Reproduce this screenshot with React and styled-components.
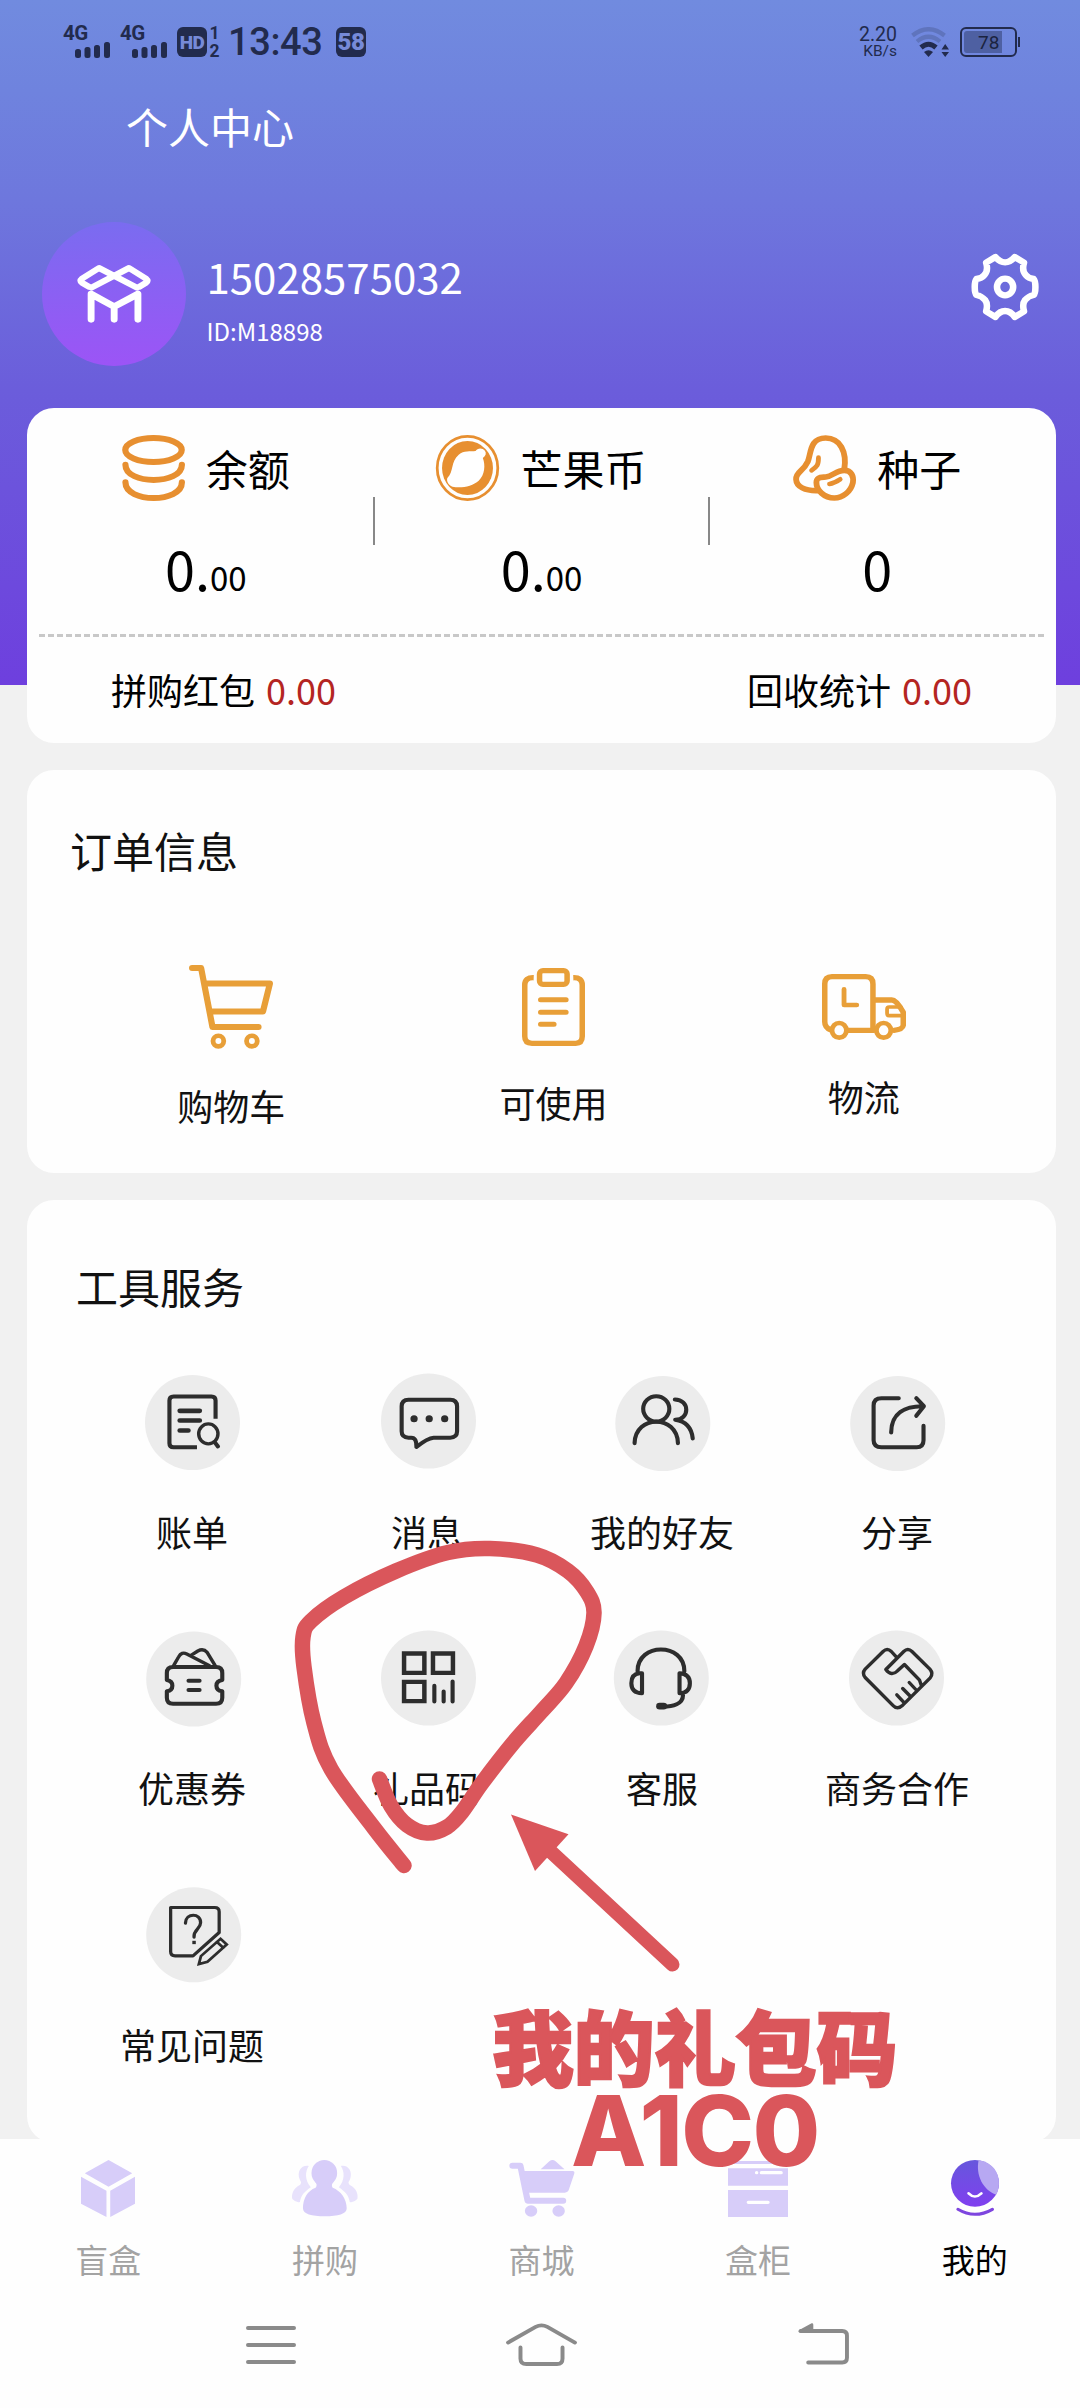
import React from "react";
import styled, { createGlobalStyle } from "styled-components";

const GlobalStyle = createGlobalStyle`
  html, body { margin: 0; padding: 0; background: #fff; }
  * { box-sizing: border-box; }
  svg { display: block; flex: none; }
`;

const cjk = `"Noto Sans CJK SC", "Noto Sans", sans-serif`;
const INK = "#222b4d";
const ORANGE = "#e78f30";
const AMBER = "#e89f38";
const DARK = "#2d2d2d";
const LILAC = "#d7cdf9";
const RED = "#da565b";

const Screen = styled.div`
  position: relative;
  width: 1080px;
  height: 2408px;
  overflow: hidden;
  font-family: ${cjk};
  font-weight: 400;
  color: #111;
`;

const Page = styled.div`
  width: 1083px;
  height: 2408px;
  display: flex;
  flex-direction: column;
  background: linear-gradient(180deg, #718bdf 0, #6f83de 90px, #6e77dd 200px, #6b5ddb 390px, #6e3fde 685px) 0 0 / 100% 685px no-repeat #f1f1f1;
`;

/* ---------- status bar ---------- */

const StatusBar = styled.div`
  width: 1080px;
  height: 84px;
  flex: none;
  padding: 0 60px 0 63px;
  display: flex;
  align-items: center;
  color: ${INK};
  font-family: Roboto, sans-serif;
`;

const Signal = styled.div`
  width: 48px;
  height: 32px;
  margin-right: 9px;
  display: flex;
  flex-direction: column;
`;

const SignalLabel = styled.span`
  height: 15px;
  font-size: 20.5px;
  line-height: 15px;
  font-weight: 700;
  letter-spacing: -0.5px;
`;

const SignalBars = styled.svg`
  width: 35px;
  height: 16px;
  margin: 1px 0 0 12px;
`;

const Badge = styled.div`
  width: 30px;
  height: 30px;
  border-radius: 6px;
  background: ${INK};
  color: #768ad8;
  display: flex;
  align-items: center;
  justify-content: center;
  font-size: ${(p) => p.$size}px;
  font-weight: 900;
  letter-spacing: -0.5px;
`;

const SimStack = styled.div`
  width: 11px;
  height: 32px;
  margin: 0 8px 0 2px;
  display: flex;
  flex-direction: column;
  justify-content: space-between;
  align-items: center;
  font-size: 17.5px;
  line-height: 14px;
  font-weight: 700;
`;

const Clock = styled.span`
  font-size: 38px;
  line-height: 44px;
  font-weight: 500;
  letter-spacing: -0.4px;
  width: 97px;
  margin-right: 11px;
`;

const Speed = styled.div`
  margin-left: auto;
  margin-right: 14px;
  display: flex;
  flex-direction: column;
  align-items: flex-end;
  font-size: 15.5px;
  line-height: 15px;
`;

const SpeedValue = styled.span`
  font-size: 19.5px;
  line-height: 18px;
`;

const Battery = styled.div`
  width: 57px;
  height: 30px;
  margin-left: 11px;
  padding: 2px;
  border: 2px solid ${INK};
  border-radius: 6px;
`;

const BatteryFill = styled.div`
  width: 38px;
  height: 22px;
  padding-left: 14px;
  background: #4e60a2;
  border-radius: 3px 0 0 3px;
  font-size: 19px;
  line-height: 24px;
  color: #1b2340;
`;

const BatteryNub = styled.div`
  width: 2px;
  height: 10px;
  margin-left: 1px;
  background: ${INK};
`;

/* ---------- header ---------- */

const TitleBar = styled.div`
  height: 82px;
  flex: none;
  padding: 1px 0 0 126px;
  font-size: 42px;
  line-height: 82px;
  color: #fff;
`;

const Profile = styled.div`
  height: 242px;
  flex: none;
  padding: 56px 45px 0 42px;
  display: flex;
  align-items: flex-start;
  color: #fff;
`;

const Avatar = styled.div`
  width: 144px;
  height: 144px;
  border-radius: 50%;
  background: linear-gradient(180deg, #7a6cf0, #9c54f6);
  display: flex;
  align-items: center;
  justify-content: center;
`;

const Identity = styled.div`
  margin: 29px auto 0 20.5px;
  display: flex;
  flex-direction: column;
`;

const UserName = styled.span`
  font-size: 42px;
  line-height: 50px;
`;

const UserId = styled.span`
  margin-top: 15px;
  font-size: 24px;
  line-height: 30px;
`;

const GearSlot = styled.div`
  padding-top: 32px;
`;

/* ---------- cards ---------- */

const Card = styled.section`
  height: ${(p) => p.$h}px;
  flex: none;
  margin: ${(p) => p.$top || 0}px 27px 0;
  padding: ${(p) => p.$pad};
  border-radius: 27px;
  background: #fefefe;
`;

const CardTitle = styled.h2`
  margin: 0 0 0 ${(p) => p.$indent || 0}px;
  font-size: 42px;
  line-height: 50px;
  font-weight: 400;
`;

const Stats = styled.div`
  height: 202px;
  display: grid;
  grid-template-columns: 1fr 2px 1fr 2px 1fr;
  border-bottom: 3px dashed #c8c8c8;
  color: #000;
`;

const Stat = styled.div`
  display: flex;
  flex-direction: column;
  align-items: center;
`;

const StatHead = styled.div`
  height: 66px;
  display: flex;
  align-items: center;
  gap: 21px;
  font-size: 42px;
  line-height: 66px;
`;

const StatValue = styled.div`
  margin-top: 37px;
  font-size: 54px;
  line-height: 60px;
`;

const Cents = styled.span`
  font-size: 33px;
  line-height: 1;
`;

const Divider = styled.div`
  height: 48px;
  margin-top: 62px;
  background: #888;
`;

const Totals = styled.div`
  height: 106px;
  padding: 0 72px 2px;
  display: flex;
  align-items: center;
  justify-content: space-between;
  font-size: 36px;
  color: #000;
`;

const Total = styled.div`
  display: flex;
  gap: 11px;
`;

const Amount = styled.span`
  color: #b42522;
`;

const Orders = styled.div`
  margin-top: 90px;
  display: flex;
  align-items: center;
  justify-content: space-around;
`;

const Order = styled.div`
  display: flex;
  flex-direction: column;
  align-items: center;
  gap: 35px;
  font-size: 36px;
  line-height: 42px;
`;

const Tools = styled.div`
  margin-top: 63.5px;
  display: grid;
  grid-template-columns: repeat(4, 235px);
  grid-auto-rows: 256.3px;
`;

const Tool = styled.div`
  display: flex;
  flex-direction: column;
  align-items: center;
  gap: 40.5px;
  font-size: 36px;
  line-height: 42px;
`;

const Disc = styled.div`
  width: 95px;
  height: 95px;
  border-radius: 50%;
  background: #ececec;
  transform: translate(${(p) => p.$dx}px, ${(p) => p.$dy}px);
`;

/* ---------- bottom bars ---------- */

const TabBar = styled.nav`
  position: relative;
  height: 144px;
  flex: none;
  margin-top: -4px;
  padding-top: 21px;
  display: grid;
  grid-template-columns: repeat(5, 1fr);
  background: #fefefe;
`;

const Tab = styled.div`
  display: flex;
  flex-direction: column;
  align-items: center;
  gap: 22px;
  font-size: 33px;
  line-height: 40px;
  color: ${(p) => (p.$active ? "#000" : "#a3a3a3")};
`;

const NavBar = styled.div`
  height: 125px;
  flex: none;
  padding: 0 234px 1px 246px;
  display: flex;
  align-items: center;
  justify-content: space-between;
  background: #fefefe;
`;

const HomeSlot = styled.div`
  padding: 0 11px 1px 0;
`;

const BackSlot = styled.div`
  padding-bottom: 3px;
`;

/* ---------- marker drawn over the page ---------- */

const Marker = styled.svg`
  position: absolute;
  inset: 0;
  width: 1080px;
  height: 2408px;
`;

const MarkerNote = styled.div`
  position: absolute;
  top: 2001px;
  left: 491px;
  width: 408px;
  display: flex;
  flex-direction: column;
  align-items: center;
  color: ${RED};
  font-size: 81px;
  line-height: 86px;
  font-weight: 900;
  white-space: nowrap;
  -webkit-text-stroke: 2.4px ${RED};
`;

const MarkerCode = styled.span`
  font-family: Inter, "Liberation Sans", sans-serif;
  font-size: 98px;
  line-height: 87px;
  font-weight: 800;
  letter-spacing: -1.5px;
  -webkit-text-stroke: 0;
`;

/* ---------- drawings ---------- */

function Art({ w, h, box, color = "none", stroke, sw = 0, children }) {
  return (
    <svg
      width={w}
      height={h}
      viewBox={box}
      preserveAspectRatio="none"
      fill={color}
      stroke={stroke}
      strokeWidth={sw}
      strokeLinecap="round"
      strokeLinejoin="round"
      overflow="visible"
    >
      {children}
    </svg>
  );
}

const Bars = () => (
  <SignalBars viewBox="0 0 35 16" fill={INK}>
    <rect x="0" y="7" width="6" height="9" rx="2.5" />
    <rect x="9.5" y="5" width="6" height="11" rx="2.5" />
    <rect x="19" y="3" width="6" height="13" rx="2.5" />
    <rect x="29" y="0" width="6" height="16" rx="2.5" />
  </SignalBars>
);

const Wifi = () => (
  <svg width="38" height="30" viewBox="0 0 38 30" fill="none">
    <path d="M1.5 8.5 Q17.5 -4 33.5 8.5" stroke="#5f74bd" strokeWidth="4.4" />
    <path d="M6 14.5 Q17.5 5 29 14.5" stroke="#5f74bd" strokeWidth="4.2" />
    <path d="M10 20.5 Q17.5 14 25 20.5" stroke={INK} strokeWidth="5" />
    <path d="M13 25 Q17.5 21.5 22 25 L17.5 30Z" fill={INK} />
    <path d="M30.5 22.5 L34.2 17 L38 22.5Z M30.5 25 H38 L34.2 30Z" fill={INK} />
  </svg>
);

const Logo = () => (
  <Art w={74} h={57.3} box="224 796 215 172" stroke="#fff" sw={20}>
    <path d="M265 959 V883 L332 921 L401 883 V959 M332 921 V959" />
    <path strokeWidth="18" d="M258 861 L238 849 Q230 844 238 837 L288 805 L398 864" />
    <path strokeWidth="18" d="M406 861 L425 849 Q433 844 425 837 L375 805 L266 864" />
  </Art>
);

const Gear = () => (
  <Art w={66.5} h={66} box="1254 762 193 198" stroke="#fff" sw={19}>
    <path d="M1322 771 Q1335 787 1350 787 Q1365 787 1378 771 L1405 788 Q1398 812 1410 825 Q1418 835 1433 837 Q1438 843 1438 861 Q1438 880 1433 885 Q1418 888 1408 900 Q1399 912 1405 934 L1378 951 Q1366 933 1350 933 Q1334 933 1322 951 L1295 934 Q1301 912 1292 900 Q1282 888 1267 885 Q1262 880 1262 861 Q1262 843 1267 837 Q1282 835 1290 825 Q1302 812 1295 788Z" />
    <ellipse cx="1350" cy="861" rx="23.5" ry="25" />
  </Art>
);

const Coins = () => (
  <Art w={63} h={66} box="354 135 183 198" stroke={ORANGE} sw={18}>
    <ellipse cx="445.5" cy="180" rx="82" ry="36" />
    <path d="M364 224 C364 285 528 285 528 224 M364 277 C364 340 528 340 528 277" />
  </Art>
);

const MangoCoin = () => (
  <Art w={63} h={66} box="1266 135 183 198">
    <ellipse cx="1357.5" cy="234" rx="88" ry="95" stroke={ORANGE} strokeWidth="8" />
    <ellipse cx="1357.5" cy="234" rx="74" ry="81" fill={ORANGE} />
    <path
      fill="#fff"
      d="M1299 264 C1318 245 1308 215 1332 194 C1347 181 1365 185 1381 183 C1386 174 1400 172 1408 182 C1413 189 1411 197 1402 204 C1410 225 1408 255 1390 272 C1372 288 1340 296 1314 290 C1301 285 1296 272 1299 264Z"
    />
  </Art>
);

const Seeds = () => (
  <Art w={63} h={66} box="735 135 183 198" stroke={ORANGE} sw={17}>
    <path d="M806 302 C770 303 745 290 744 268 C743 245 765 245 778 215 C788 190 783 144 830 144 C872 144 892 185 884 238" />
    <path d="M884 241 C905 241 912 260 909 278 C903 305 880 324 855 324 C825 324 803 300 803 278 C803 262 812 263 830 261 C850 259 860 241 884 241Z" />
    <path strokeWidth="14" d="M809 203 C809 225 805 230 789 241 M841 282 C855 280 862 275 872 268" />
  </Art>
);

const Cart = () => (
  <Art w={84} h={84} box="549 614 243 253" stroke={AMBER} sw={18}>
    <path d="M558 623 H584 L617 801 H750 M598 670 H783 L763 754 H612" />
    <ellipse cx="634" cy="843" rx="15.5" ry="16" strokeWidth="14" />
    <ellipse cx="731" cy="843" rx="15.5" ry="16" strokeWidth="14" />
  </Art>
);

const Clipboard = () => (
  <Art w={63} h={78} box="1516 624 183 233" stroke={AMBER} sw={16}>
    <path strokeLinecap="butt" d="M1665 653 Q1691 652 1691 675 V828 Q1691 849 1672 849 H1545 Q1524 849 1524 828 V675 Q1524 652 1550 653" />
    <rect x="1567" y="632" width="80" height="41" rx="10" />
    <path strokeWidth="15" d="M1570 719 H1644 M1570 756 H1644 M1570 792 H1609" />
  </Art>
);

const Truck = () => (
  <Art w={84} h={66} box="819 642 244 198" stroke={AMBER} sw={16}>
    <path d="M845 810 Q827 803 827 785 V672 Q827 650 848 650 H946 Q967 650 967 672 V806" />
    <path d="M896 811 H970 M970 720 H1022 Q1035 720 1055 757 V796 Q1053 808 1028 811" />
    <ellipse cx="869" cy="811" rx="21" ry="22" strokeWidth="14" />
    <ellipse cx="998" cy="811" rx="21" ry="22" strokeWidth="14" />
    <path strokeWidth="11" d="M1048 741 H1014 Q1008 741 1008 748 V760 Q1008 767 1014 767 H1050" />
    <path strokeWidth="14" d="M883 688 V735 H920" />
  </Art>
);

const toolDrawings = {
  bill: (
    <>
      <path strokeLinecap="butt" d="M624 657 V602 Q624 590 612 590 H502 Q490 590 490 602 V730 Q490 742 502 742 H570" />
      <path strokeWidth="14" d="M520 633 H578 M520 662 H578 M520 692 H545" />
      <ellipse cx="603" cy="702" rx="28" ry="30" strokeWidth="10" />
      <path d="M623 729 L631 740" />
    </>
  ),
  message: (
    <>
      <path d="M1185 600 H1306 Q1326 600 1326 620 V695 Q1326 714 1306 714 H1258 Q1240 715 1208 742 Q1209 714 1193 714 H1185 Q1165 714 1165 695 V620 Q1165 600 1185 600Z" />
      <path strokeWidth="21" d="M1201 657 h.1 M1245 657 h.1 M1290 657 h.1" />
    </>
  ),
  friends: (
    <>
      <ellipse cx="336" cy="628" rx="38" ry="38" />
      <path d="M273 731 C275 645 397 645 399 731 M390 600 C434 600 434 661 391 661 Q437 668 442 717" />
    </>
  ),
  share: (
    <path d="M1040 596 H990 Q967 596 967 618 V722 Q967 743 990 743 H1092 Q1112 743 1112 722 V679 M1018 699 C1018 640 1060 620 1108 620 M1091 596 L1113 620 L1091 649" />
  ),
  coupon: (
    <>
      <path d="M500 204 H625 Q643 204 643 222 V243 Q626 246 626 260 Q626 274 643 277 V296 Q643 314 625 314 H500 Q482 314 482 296 V277 Q498 274 498 260 Q498 246 482 243 V222 Q482 204 500 204Z" />
      <path strokeWidth="10" d="M502 199 L516 174 Q525 157 540 165 L606 200 M552 169 L572 156 Q588 147 599 160 L622 199" />
      <path d="M545 245 H577 M545 273 H577" />
    </>
  ),
  gift: (
    <>
      <path strokeLinejoin="miter" strokeWidth="13" d="M1172 163 H1231 V221 H1172Z M1256 163 H1314 V221 H1256Z M1172 248 H1231 V306 H1172Z" />
      <path d="M1260 260 V307 M1287 277 V307 M1313 247 V307" />
    </>
  ),
  service: (
    <>
      <path d="M282 216 C282 129 418 129 418 216 M295 222 H288 Q264 224 264 252 Q264 281 295 282Z M404 222 V282 Q434 281 434 252 Q434 224 404 222Z M414 288 C414 314 385 322 355 322" />
      <path strokeWidth="20" d="M346 321 H358" />
    </>
  ),
  partner: (
    <path
      strokeWidth="10"
      d="M1033 174 L1018 157 Q1006 145 994 157 L942 210 Q932 222 942 235 L1024 320 Q1036 332 1049 320 L1131 236 Q1141 223 1130 210 L1078 157 Q1066 145 1054 157 L1002 211 Q1018 233 1036 215 L1056 196 L1100 243 L1106 261 M1034 287 L1053 308 M1051 268 L1071 289 M1070 250 L1089 271"
    />
  ),
  faq: (
    <g strokeWidth="9.5">
      <path d="M493 926 H621 Q634 926 634 939 V1001 L558 1071 H506 Q493 1071 493 1058Z" />
      <path d="M536 973 C537 941 581 942 580 972 C580 991 559 992 561 1015" />
      <path strokeWidth="10" strokeLinecap="square" d="M561 1031 h.1" />
      <path strokeLinejoin="miter" strokeWidth="8" d="M575 1096 L581 1072 L638 1020 L656 1037 L600 1089 Z M627 1029 L646 1047" />
    </g>
  ),
};

const BoxIcon = () => (
  <Art w={54} h={57} box="235 180 157 171" color={LILAC}>
    <path d="M315 180 L384 220 L315 260 L246 220Z M235 230 L309 272 V351 L235 311Z M392 230 L320 272 V351 L392 311Z" />
  </Art>
);

const sideFigure =
  "M897 198 C875 194 862 215 870 237 C874 247 877 246 872 254 C850 265 846 285 849 297 Q860 309 871 306 C875 285 885 275 903 262 C885 240 886 215 897 198Z";

const GroupIcon = () => (
  <Art w={66} h={57} box="848 180 193 171" color={LILAC}>
    <path fill="#e8e2fc" d={sideFigure} />
    <path fill="#e8e2fc" transform="translate(1888 0) scale(-1 1)" d={sideFigure} />
    <ellipse cx="942.5" cy="219" rx="37.5" ry="39" />
    <path d="M915 244 Q924 256 917 263 C893 272 880 296 880 325 C880 342 905 349 944 349 C983 349 1008 342 1008 325 C1008 296 990 272 967 263 Q961 256 970 244Z" />
  </Art>
);

const MallIcon = () => (
  <Art w={65.5} h={57} box="1476 180 190 171" color={LILAC}>
    <path fill="none" stroke={LILAC} strokeWidth="18" d="M1486 197 H1509 L1530 302 H1633" />
    <path d="M1518 213 H1660 Q1668 213 1665 222 L1650 268 Q1647 278 1638 278 H1530Z M1568 208 L1593 184 Q1602 176 1611 184 L1637 208Z" />
    <ellipse cx="1540" cy="333" rx="18" ry="17" />
    <ellipse cx="1620" cy="333" rx="18" ry="17" />
  </Art>
);

const CabinetIcon = () => (
  <Art w={60} h={57} box="546 180 174 171" color={LILAC}>
    <path d="M560 183 H706 V192 H560Z M546 205 H720 V257 H546Z M546 270 H720 V351 H546Z" />
    <path stroke="#fff" strokeWidth="10" d="M605 307 H662 M643 218 H700 M629 218 h.1" />
  </Art>
);

const MeIcon = () => (
  <Art w={48} h={57} box="1193 180 139 171">
    <defs>
      <linearGradient id="orb" x1="0" y1="0" x2="0" y2="1">
        <stop offset="0" stopColor="#6657dc" />
        <stop offset="1" stopColor="#803fef" />
      </linearGradient>
    </defs>
    <ellipse cx="1262.5" cy="250" rx="69.5" ry="70" fill="url(#orb)" />
    <path fill="#b7a8f2" d="M1273 180 C1312 186 1333 217 1332 252 Q1331 270 1324 284 C1285 270 1264 225 1273 180Z" />
    <path stroke="#fff" strokeWidth="8" d="M1244 280 Q1262 299 1281 280" />
    <path stroke="#7e46df" strokeWidth="9" d="M1213 328 Q1262 358 1313 328" />
  </Art>
);

const MenuKey = () => (
  <Art w={50} h={38} box="0 0 50 38" stroke="#8a8a8a" sw={4}>
    <path d="M2 2 H48 M2 19 H48 M2 36 H48" />
  </Art>
);

const HomeKey = () => (
  <Art w={71} h={43} box="1468 668 206 130" stroke="#8a8a8a" sw={11.5}>
    <path d="M1474 727 L1554 680 Q1571 670 1588 680 L1668 727 M1510 742 V775 Q1510 792 1527 792 H1616 Q1632 792 1632 775 V742" />
  </Art>
);

const BackKey = () => (
  <Art w={51} h={41.5} box="748 668 150 124" stroke="#8a8a8a" sw={11.5}>
    <path d="M778 786 H878 Q892 786 892 772 V706 Q892 692 878 692 H756" />
    <path fill="#8a8a8a" stroke="none" d="M749 693 Q749 690 753 688 L788 669 Q793 668 793 673 V697 H755 Q749 697 749 693Z" />
  </Art>
);

/* Smooth curve through a list of points (Catmull-Rom as cubic Béziers). */
function curveThrough(pts) {
  let d = `M${pts[0][0]} ${pts[0][1]}`;
  for (let i = 0; i < pts.length - 1; i++) {
    const a = pts[i - 1] || pts[i];
    const b = pts[i];
    const c = pts[i + 1];
    const e = pts[i + 2] || c;
    d += ` C${b[0] + (c[0] - a[0]) / 6} ${b[1] + (c[1] - a[1]) / 6} ${c[0] - (e[0] - b[0]) / 6} ${c[1] - (e[1] - b[1]) / 6} ${c[0]} ${c[1]}`;
  }
  return d;
}

const loop = [
  [404, 1865.5], [374, 1828], [331, 1769], [314, 1723], [304, 1667], [303, 1637],
  [311, 1621], [344, 1597], [396, 1571], [448, 1552.5], [490, 1548.5], [537, 1555],
  [568, 1571], [587, 1592], [594, 1613], [586, 1646], [566, 1683], [541, 1712],
  [514, 1742], [482, 1783], [462, 1812], [447, 1827], [427, 1833], [407, 1825],
  [391, 1806], [379.5, 1779],
];

/* ---------- content ---------- */

const stats = [
  { name: "余额", Icon: Coins, whole: "0.", cents: "00" },
  { name: "芒果币", Icon: MangoCoin, whole: "0.", cents: "00" },
  { name: "种子", Icon: Seeds, whole: "0" },
];

const orders = [
  { name: "购物车", Icon: Cart },
  { name: "可使用", Icon: Clipboard },
  { name: "物流", Icon: Truck },
];

const tools = [
  { name: "账单", art: "bill", at: [557, 668], dx: 0, dy: 0 },
  { name: "消息", art: "message", at: [1243, 664], dx: 1, dy: -1.5 },
  { name: "我的好友", art: "friends", at: [355, 672], dx: 0.3, dy: 1 },
  { name: "分享", art: "share", at: [1037, 672], dx: 0.2, dy: 1 },
  { name: "优惠券", art: "coupon", at: [560, 240], dx: 1.2, dy: 0.5 },
  { name: "礼品码", art: "gift", at: [1243, 236.5], dx: 1, dy: -0.5 },
  { name: "客服", art: "service", at: [351, 236.5], dx: -1.2, dy: -0.5 },
  { name: "商务合作", art: "partner", at: [1033, 236.5], dx: -1, dy: -0.5 },
  { name: "常见问题", art: "faq", at: [560, 1008], dx: 1.2, dy: 0.3 },
];

const tabs = [
  { name: "盲盒", Icon: BoxIcon },
  { name: "拼购", Icon: GroupIcon },
  { name: "商城", Icon: MallIcon },
  { name: "盒柜", Icon: CabinetIcon },
  { name: "我的", Icon: MeIcon, active: true },
];

export default function App() {
  return (
    <Screen>
      <GlobalStyle />
      <Page>
        <StatusBar>
          <Signal><SignalLabel>4G</SignalLabel><Bars /></Signal>
          <Signal><SignalLabel>4G</SignalLabel><Bars /></Signal>
          <Badge $size={19}>HD</Badge>
          <SimStack><span>1</span><span>2</span></SimStack>
          <Clock>13:43</Clock>
          <Badge $size={24}>58</Badge>
          <Speed><SpeedValue>2.20</SpeedValue>KB/s</Speed>
          <Wifi />
          <Battery><BatteryFill>78</BatteryFill></Battery>
          <BatteryNub />
        </StatusBar>

        <TitleBar>个人中心</TitleBar>

        <Profile>
          <Avatar><Logo /></Avatar>
          <Identity>
            <UserName>15028575032</UserName>
            <UserId>ID:M18898</UserId>
          </Identity>
          <GearSlot><Gear /></GearSlot>
        </Profile>

        <Card $h={335} $pad="27px 12px 0">
          <Stats>
            {stats.map(({ name, Icon, whole, cents }, i) => (
              <React.Fragment key={name}>
                {i > 0 && <Divider />}
                <Stat>
                  <StatHead><Icon />{name}</StatHead>
                  <StatValue>{whole}{cents && <Cents>{cents}</Cents>}</StatValue>
                </Stat>
              </React.Fragment>
            ))}
          </Stats>
          <Totals>
            <Total>拼购红包<Amount>0.00</Amount></Total>
            <Total>回收统计<Amount>0.00</Amount></Total>
          </Totals>
        </Card>

        <Card $h={403} $top={27} $pad="55px 43px 0">
          <CardTitle>订单信息</CardTitle>
          <Orders>
            {orders.map(({ name, Icon }) => (
              <Order key={name}><Icon />{name}</Order>
            ))}
          </Orders>
        </Card>

        <Card $h={943} $top={27} $pad="61px 41.5px 0 47.5px">
          <CardTitle $indent={1.5}>工具服务</CardTitle>
          <Tools>
            {tools.map(({ name, art, at, dx, dy }) => (
              <Tool key={name}>
                <Disc $dx={dx} $dy={dy}>
                  <Art w={95} h={95} box={`${at[0] - 138} ${at[1] - 142.5} 276 285`} stroke={DARK} sw={12}>
                    {toolDrawings[art]}
                  </Art>
                </Disc>
                {name}
              </Tool>
            ))}
          </Tools>
        </Card>

        <TabBar>
          {tabs.map(({ name, Icon, active }) => (
            <Tab key={name} $active={active}><Icon />{name}</Tab>
          ))}
        </TabBar>

        <NavBar>
          <MenuKey />
          <HomeSlot><HomeKey /></HomeSlot>
          <BackSlot><BackKey /></BackSlot>
        </NavBar>
      </Page>

      <Marker viewBox="0 0 1080 2408" fill="none" stroke={RED} strokeLinecap="round" strokeLinejoin="round">
        <path strokeWidth="15.5" d={curveThrough(loop)} />
        <path strokeWidth="14" d="M548 1849 L672.5 1964.5" />
        <path stroke="none" fill={RED} d="M511 1814.5 L568.5 1834.3 L535 1871Z" />
      </Marker>
      <MarkerNote>
        我的礼包码
        <MarkerCode>A1C0</MarkerCode>
      </MarkerNote>
    </Screen>
  );
}
